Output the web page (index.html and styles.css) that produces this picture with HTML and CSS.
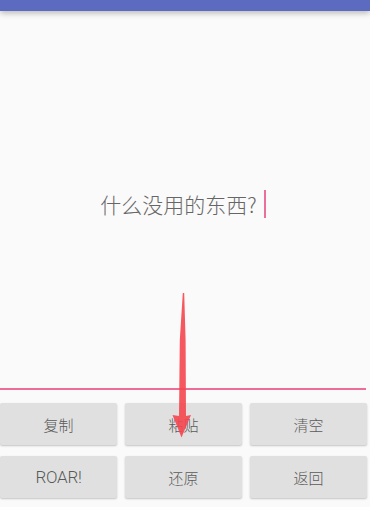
FILE: index.html
```html
<!DOCTYPE html>
<html lang="zh">
<head>
<meta charset="utf-8">
<link rel="stylesheet" href="styles.css">
</head>
<body>
<div class="screen">
  <div class="appbar"></div>
  <div class="editor">
    <span class="text">什么没用的东西?</span><span class="cursor"></span>
  </div>
  <div class="underline"></div>
  <div class="buttons">
    <div class="btn">复制</div>
    <div class="btn">粘贴</div>
    <div class="btn">清空</div>
    <div class="btn latin">ROAR!</div>
    <div class="btn">还原</div>
    <div class="btn">返回</div>
  </div>
  <svg class="arrow" width="370" height="507" viewBox="0 0 370 507">
    <path d="M182.8 293 L184.2 293 L185.6 340 L186 416 L191 415 L181.5 437.5 L172.5 415 L179 416 L179.8 340 Z" fill="#f5464f" opacity="0.9"/>
  </svg>
</div>
</body>
</html>
```

FILE: styles.css
```css
html, body {
  margin: 0;
  padding: 0;
  background: #fafafa;
}
.screen {
  position: relative;
  width: 370px;
  height: 507px;
  overflow: hidden;
  background: #fafafa;
  font-family: "Noto Sans CJK SC", "Noto Sans", sans-serif;
}
.appbar {
  height: 11px;
  background: #5c6bc0;
  box-shadow: 0 2px 6px rgba(0,0,0,0.28);
  position: relative;
  z-index: 1;
}
.editor {
  height: 368px;
  padding-top: 9px;
  padding-right: 4px;
  display: flex;
  align-items: center;
  justify-content: center;
}
.text {
  font-size: 21px;
  font-weight: 300;
  color: #666666;
  line-height: 28px;
}
.cursor {
  display: inline-block;
  width: 2px;
  height: 28px;
  background: #e9709b;
  margin-left: 7px;
}
.underline {
  height: 2px;
  width: 366px;
  background: #ec6d97;
}
.buttons {
  display: grid;
  grid-template-columns: repeat(3, 117px);
  grid-auto-rows: 42px;
  column-gap: 8px;
  row-gap: 11px;
  margin-top: 13px;
}
.btn {
  background: #e0e0e0;
  border-radius: 2px;
  box-shadow: 0 1px 2px rgba(0,0,0,0.22);
  display: flex;
  align-items: center;
  justify-content: center;
  font-size: 15px;
  font-weight: 300;
  color: #5a5a5a;
}
.latin {
  font-family: "Roboto", "Noto Sans", sans-serif;
  font-size: 17px;
  font-weight: 300;
  letter-spacing: -0.3px;
}
.arrow {
  position: absolute;
  left: 0;
  top: 0;
  pointer-events: none;
}
```
